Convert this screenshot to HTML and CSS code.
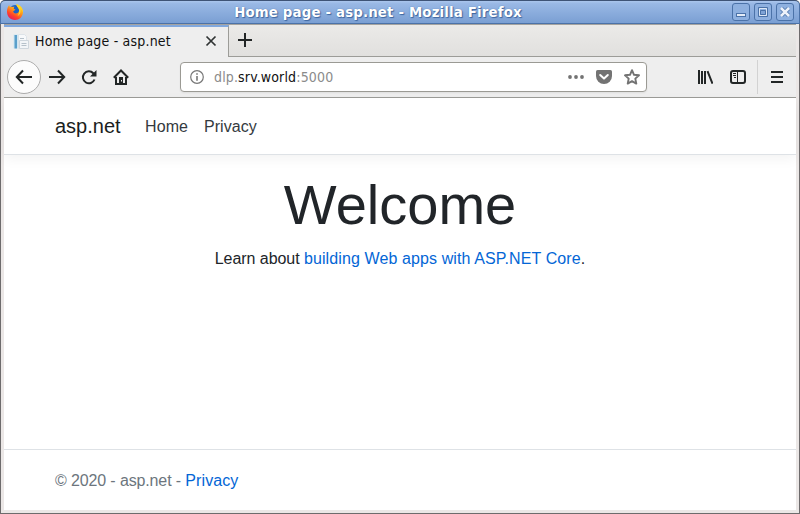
FILE: index.html
```html
<!DOCTYPE html>
<html lang="en">
<head>
<meta charset="utf-8">
<title>Home page - asp.net</title>
<link rel="stylesheet" href="styles.css">
</head>
<body>
<div class="window">
  <header class="titlebar">
    <svg class="fox" width="18" height="18" viewBox="0 0 18 18">
      <defs>
        <linearGradient id="flame" x1="0.8" y1="0" x2="0.2" y2="1"><stop offset="0" stop-color="#ffe226"/><stop offset=".4" stop-color="#ff9a18"/><stop offset=".7" stop-color="#ff4528"/><stop offset="1" stop-color="#e3126a"/></linearGradient>
      </defs>
      <circle cx="9.200" cy="8.500" r="6.500" fill="#1b62c4"/>
      <path d="M1 8C1.200 5 2 3.500 3.200 2L4 4.200C5 3.600 6 3.600 7 4L8.300 3.400 7.700 5.800 9.500 6.800 7.200 8.200C7.600 10.500 10 11 12 9.800 13.600 8.500 13.600 5.800 11.300 3.800L10.300 1.200C14.500 2 17.300 5.500 17 9.500 16.600 14 13.400 17 9 17 4.200 17 .8 13.300 1 8Z" fill="url(#flame)"/>
      <path d="M10 1.200C14.500 2 17.300 5.500 16.800 9.600 16 8 15.600 6.500 14.500 5.300 15.300 9 14 12 11.500 13 14 10 13.500 6 11.300 3.800Z" fill="#ffd522"/>
    </svg>
    <h1 class="caption">Home page - asp.net - Mozilla Firefox</h1>
    <div class="controls">
      <svg width="18" height="18" viewBox="0 0 18 18"><rect class="key" x=".5" y=".5" width="17" height="17" rx="2.500"/><rect x="4.500" y="10.500" width="9" height="3" fill="#e4ecf7" stroke="#4b72a8"/></svg>
      <svg width="18" height="18" viewBox="0 0 18 18"><rect class="key" x=".5" y=".5" width="17" height="17" rx="2.500"/><path d="M4.500 4.500h9v9h-9z" fill="none" stroke="#4b72a8"/><path d="M5.500 5.500h7v7h-7z" fill="none" stroke="#dce7f5"/><path d="M6.500 7.500h5v4h-5z" fill="#7fa3d5" stroke="#4b72a8"/></svg>
      <svg width="18" height="18" viewBox="0 0 18 18"><rect class="key" x=".5" y=".5" width="17" height="17" rx="2.500"/><path d="M5.500 5.500l7 7m0-7l-7 7" stroke="#4b72a8" stroke-width="4"/><path d="M5 5l8 8m0-8l-8 8" stroke="#edf2fa" stroke-width="2.500"/></svg>
    </div>
  </header>
  <div class="frame">
    <div class="tabs">
      <div class="tab">
        <svg class="favicon" width="16" height="16" viewBox="0 0 16 16"><path d="M5.500 .5h6l2 2v12h-8z" fill="#f7f9fb" stroke="#dde3e8"/><path d="M.5 .5h4.500v14H.5z" fill="#cfe6f2"/><path d="M1.500 1h2.500v13.500H1.500z" fill="#5b9fca"/><path d="M6.500 6.500h9v8h-9z" fill="#f2f5f8" stroke="#ced6dd"/><path d="M7 4.500h4M8.500 9.500h5M8.500 11.500h5" stroke="#b6c1ca"/></svg>
        <span class="tab-name">Home page - asp.net</span>
        <svg class="close" width="12" height="12" viewBox="0 0 12 12"><path d="M1.500 1.500l9 9m0-9l-9 9" stroke="#303434" stroke-width="1.700"/></svg>
      </div>
      <svg class="plus" width="14" height="14" viewBox="0 0 14 14"><path d="M7 0v14M0 7h14" stroke="#222626" stroke-width="2"/></svg>
    </div>
    <div class="toolbar">
      <span class="back"><svg width="18" height="16" viewBox="0 0 18 16"><path d="M17 8H2M8 1.500L1.800 8 8 14.500"/></svg></span>
      <svg class="forward" width="18" height="16" viewBox="0 0 18 16"><path d="M1 8h15M10 1.500L16.200 8 10 14.500"/></svg>
      <svg class="reload" width="16" height="16" viewBox="0 0 16 16"><path d="M13.500 10.500A6 6 0 1 1 12.300 4.200L14 6"/><path d="M15.500 1v6.500H9z" fill="#222626" stroke="none"/></svg>
      <svg class="home" width="16" height="16" viewBox="0 0 16 16"><path d="M.8 8.700L8 1.500l7.200 7.200M3 8v7h10V8"/><path d="M6 8h4v7H6z" fill="#222626" stroke="none"/><path d="M8.500 11v1.500" stroke="#eee" stroke-width="1"/></svg>
      <div class="address">
        <svg class="info" width="14" height="14" viewBox="0 0 14 14"><circle cx="7" cy="7" r="6.300" fill="none" stroke="#777" stroke-width="1.200"/><path d="M7 6v4.800M7 3.200v1.600" stroke="#777" stroke-width="1.600"/></svg>
        <span class="url">dlp.<b>srv.world</b>:5000</span>
        <svg class="dots" width="16" height="16" viewBox="0 0 16 16" fill="#737373"><circle cx="2" cy="8" r="1.900"/><circle cx="8" cy="8" r="1.900"/><circle cx="14" cy="8" r="1.900"/></svg>
        <svg width="16" height="16" viewBox="0 0 16 16"><path d="M1.600 1h12.800Q16 1 16 2.600V7a8 8 0 0 1-16 0V2.600Q0 1 1.600 1Z" fill="#737373"/><path d="M4.200 6L8 9.600 11.800 6" fill="none" stroke="#fff" stroke-width="2" stroke-linecap="round" stroke-linejoin="round"/></svg>
        <svg width="16" height="16" viewBox="0 0 16 16"><path d="M8 1.200l2 4.600 5 .5-3.700 3.300 1 5L8 12.100l-4.300 2.500 1-5L1 6.300l5-.5Z" fill="none" stroke="#737373" stroke-width="1.900" stroke-linejoin="round"/></svg>
      </div>
      <svg class="library" width="16" height="16" viewBox="0 0 16 16"><path d="M2 1v14M5 2v13M8 2v13M10.500 2.200L15.500 14.700"/></svg>
      <svg class="sidebar" width="16" height="16" viewBox="0 0 16 16"><rect x="1" y="2" width="14" height="12" rx="2"/><path d="M7.500 2v12M3 4.500h3M3 6.500h3M4 8.500h2" stroke-width="1"/></svg>
      <div class="menu"><svg width="12" height="14" viewBox="0 0 12 14"><path d="M0 2h12M0 7h12M0 12h12"/></svg></div>
    </div>
    <div class="page">
      <nav class="navbar">
        <a class="brand">asp.net</a><a class="link">Home</a><a class="link">Privacy</a>
      </nav>
      <main>
        <h2>Welcome</h2>
        <p>Learn about <a>building Web apps with ASP.NET Core</a>.</p>
      </main>
      <footer>© 2020 - asp.net - <a>Privacy</a></footer>
    </div>
  </div>
</div>
</body>
</html>
```
FILE: styles.css
```css
* { box-sizing: border-box; }
body { margin: 0; background: #fff; }
svg { display: block; flex: none; }
.window { width: 800px; height: 514px; display: flex; flex-direction: column; border-radius: 5px 5px 0 0; overflow: hidden; background: #6d6b6c; }
.titlebar { height: 24px; flex: none; display: flex; align-items: center; padding: 0 5px; border: 1px solid #4b72a8; border-top-color: #3e5376; border-radius: 5px 5px 0 0; background: linear-gradient(#aac6ed, #99b8e5 12%, #7a9fd3); }
.caption { flex: 1; margin: 2px 0 0; padding-right: 0; text-align: center; font: bold 13.330px/22px "DejaVu Sans", sans-serif; letter-spacing: .17px; color: #fff; text-shadow: 0 0 1px #3e669f, 1px 1px 1px #3e669f; white-space: nowrap; }
.controls { display: flex; gap: 4px; width: 62px; }
.key { fill: #8eb0df; stroke: #4b72a8; }
.frame { flex: 1; display: flex; flex-direction: column; margin: 0 1px 1px; border: solid #ebe7e6; border-width: 0 3px 3px; min-height: 0; }
.tabs { height: 33px; flex: none; display: flex; background: linear-gradient(#ebeae8, #e1e0de); border-top: 1px solid #a5a39f; border-bottom: 1px solid #9c9c98; }
.tab { width: 225px; height: 32px; display: flex; align-items: center; padding: 0 11px 1px 9px; background: #eee; border-top: 2px solid #81a8dd; border-right: 1px solid #9c9c98; }
.tab-name { flex: 1; margin: -2px 0 0 6px; font: 14px/18px "DejaVu Sans Condensed", "DejaVu Sans", sans-serif; font-stretch: condensed; letter-spacing: .2px; color: #111; white-space: nowrap; }
.tabs .close { margin-top: -2px; }
.plus { margin: 8px 0 0 9px; }
.toolbar { height: 41px; flex: none; display: flex; align-items: center; padding-left: 3px; background: #eee; border-bottom: 1px solid #9c9c98; stroke: #222626; stroke-width: 2; fill: none; }
.back { width: 34px; height: 34px; border: 1px solid #acacac; border-radius: 50%; background: #fcfcfc; display: grid; place-items: center; }
.forward { margin-left: 7px; }
.reload { margin-left: 15px; }
.home { margin-left: 16px; }
.address { display: flex; align-items: center; width: 467px; height: 30px; margin-left: 51px; padding: 0 6px 0 9px; background: #fff; border: 1px solid #9b9a94; border-radius: 4px; gap: 12px; stroke: none; box-shadow: 0 1px 2px #0001; }
.url { flex: 1; margin-left: -2px; font: 14px/18px "DejaVu Sans Condensed", "DejaVu Sans", sans-serif; font-stretch: condensed; letter-spacing: .15px; color: #8b8b8b; }
.url b { font-weight: normal; color: #111; }
.library { margin-left: 50px; }
.sidebar { margin-left: 17px; }
.menu { height: 34px; margin-left: 11px; padding-left: 13px; border-left: 1px solid #d2d2d2; display: flex; align-items: center; }
.page { flex: 1; min-height: 0; display: flex; flex-direction: column; background: #fff; color: #212529; font: 16px/24px "Liberation Sans", Arial, sans-serif; }
.page a { color: #0366d6; }
.navbar { height: 57px; flex: none; display: flex; align-items: center; padding: 0 51px; border-bottom: 1px solid #dee2e6; box-shadow: 0 4px 12px rgba(0, 0, 0, .05); }
.navbar .brand { font-size: 20px; line-height: 30px; color: #1b1e21; margin-right: 24.500px; }
.navbar .link { color: #343a40; margin-right: 16px; padding-top: 2px; letter-spacing: .05px; }
main { flex: 1; padding-top: 16px; text-align: center; }
h2 { margin: 0 0 9px; font-size: 56px; line-height: 67px; font-weight: 400; }
p { margin: 0; letter-spacing: -.06px; }
p a { letter-spacing: .11px; }
footer { height: 61px; flex: none; padding-left: 51px; border-top: 1px solid #dee2e6; line-height: 61px; color: #6c757d; letter-spacing: -.13px; }
footer a { letter-spacing: .1px; }
```
